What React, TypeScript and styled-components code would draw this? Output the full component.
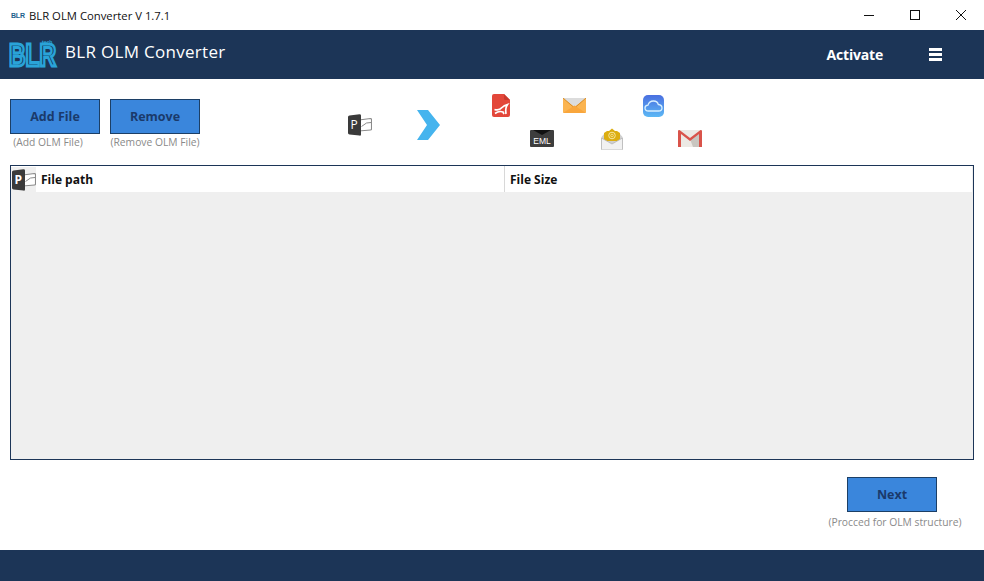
import React from 'react';
import styled, { createGlobalStyle } from 'styled-components';

const GlobalStyle = createGlobalStyle`
  html, body, #root {
    margin: 0;
    height: 100%;
  }
  body {
    background: #ffffff;
    font-family: "Open Sans", "Noto Sans", sans-serif;
    overflow: hidden;
  }
`;

const OutlookIcon = () => (
  <svg width="25" height="22" viewBox="0 0 25 22">
    <path d="M12 6 L23.500 4.500 Q24.500 4.500 24.500 5.500 V15 Q24.500 16 23.500 16 L12 17 Z" fill="#fff" stroke="#8a8a8a" strokeWidth="1.100" />
    <path d="M14.500 12.500 L19.500 9 L24 8.500" fill="none" stroke="#8a8a8a" strokeWidth="1" />
    <path d="M1 3 Q1 1.600 2.500 1.400 L12.500 0.200 Q14 0.200 14 1.600 V20.400 Q14 21.800 12.500 21.600 L2.500 20.600 Q1 20.400 1 19 Z" fill="#3a3a3a" />
    <text x="3.500" y="15" fontFamily="'Open Sans', sans-serif" fontSize="12" fill="#fff">P</text>
  </svg>
);

const ChevronIcon = () => (
  <svg width="23" height="30" viewBox="0 0 23 30">
    <path d="M0 0 H11 L23 15 L11 30 H0 L10 15 Z" fill="#45b4ee" />
  </svg>
);

const PdfIcon = () => (
  <svg width="18" height="23" viewBox="0 0 18 23">
    <path d="M2 0 H12 L18 6 V21 Q18 23 16 23 H2 Q0 23 0 21 V2 Q0 0 2 0 Z" fill="#e3473a" />
    <path d="M12 0 L18 6 H13.500 Q12 6 12 4.500 Z" fill="#c93a2e" />
    <path d="M2.500 15.500 Q7 17 10 13.500 Q12 11.500 15.500 10.500 Q13 14 14 20 M3 19.500 Q7 16.500 11 18 L12 20" fill="none" stroke="#fff" strokeWidth="1.700" />
  </svg>
);

const MailIcon = () => (
  <svg width="23" height="15" viewBox="0 0 23 15">
    <rect width="23" height="15" rx="1" fill="#fbb450" />
    <path d="M0 0 H23 L11.500 9 Z" fill="#dcdcdc" />
    <path d="M0 0 L11.500 10 L23 0" fill="none" stroke="#d98f2b" strokeWidth="1" />
    <path d="M0 15 L11.500 7.500 L23 15 Z" fill="#f9a63c" />
  </svg>
);

const CloudIcon = () => (
  <svg width="21" height="22" viewBox="0 0 21 22">
    <defs>
      <linearGradient id="cloudBg" x1="0" y1="0" x2="0" y2="1">
        <stop offset="0" stopColor="#4a6fe0" />
        <stop offset="1" stopColor="#5cb8f5" />
      </linearGradient>
    </defs>
    <rect width="21" height="22" rx="5" fill="url(#cloudBg)" />
    <path d="M5.500 16 Q2 16 2 13 Q2 10.500 5 10.200 Q6 6 10.500 6 Q14.500 6 15.300 9.500 Q19 10 19 13 Q19 16 15.500 16 Z" fill="none" stroke="#d8f0ff" strokeWidth="1.300" />
  </svg>
);

const EmlIcon = () => (
  <svg width="24" height="17" viewBox="0 0 24 17">
    <rect width="24" height="17" rx="1" fill="#3d3d3d" />
    <path d="M3 0 H21 L12 5 Z" fill="#111" />
    <text x="12" y="14" textAnchor="middle" fontFamily="'Liberation Sans', sans-serif" fontSize="8.500" fill="#fff">EML</text>
  </svg>
);

const OpenMailIcon = () => (
  <svg width="22" height="22" viewBox="0 0 22 22">
    <path d="M0.500 9 L3 6 H19 L21.500 9 V21 Q21.500 22 20.500 22 H1.500 Q0.500 22 0.500 21 Z" fill="#cfcfcf" />
    <path d="M3 5 L6 3 H8 L11 0.500 L14 3 H16 L19 5 V13 H3 Z" fill="#dcae12" />
    <circle cx="11" cy="7.500" r="3.300" fill="none" stroke="#f6e6a0" strokeWidth="1" />
    <circle cx="11" cy="7.500" r="1.300" fill="none" stroke="#f6e6a0" strokeWidth="0.800" />
    <path d="M0.500 10 L11 16 L21.500 10 V21 Q21.500 22 20.500 22 H1.500 Q0.500 22 0.500 21 Z" fill="#f1f1f1" stroke="#b5b5b5" strokeWidth="0.800" />
  </svg>
);

const GmailIcon = () => (
  <svg width="24" height="17" viewBox="0 0 24 17">
    <rect width="24" height="17" fill="#ece9e4" />
    <path d="M12 9 L21 3 V17 H15 Z" fill="#c9c6c0" />
    <path d="M0 1 Q0 0 1.500 0 L12 8 L22.500 0 Q24 0 24 1 V17 H21 V4 L12 11 L3 4 V17 H0 Z" fill="#d9534a" />
  </svg>
);

const Page = styled.div`
  display: flex;
  flex-direction: column;
  height: 100%;
`;

const TitleBar = styled.div`
  display: flex;
  align-items: center;
  height: 30px;
  padding-left: 11px;
  background: #ffffff;
`;

const TinyLogo = styled.span`
  width: 18px;
  font: 800 7px "Liberation Sans", sans-serif;
  letter-spacing: -0.2px;
  color: #1c5f8c;
`;

const WindowTitle = styled.span`
  font-size: 11.3px;
  color: #111111;
`;

const WindowButtons = styled.div`
  display: flex;
  margin-left: auto;
`;

const WindowButton = styled.div`
  display: flex;
  align-items: center;
  justify-content: center;
  width: 46px;
  height: 30px;
`;

const Header = styled.header`
  display: flex;
  align-items: center;
  height: 49px;
  padding-left: 9px;
  background: #1c3557;
`;

const Logo = styled.div`
  position: relative;
  width: 56px;
  height: 30px;
`;

const LogoLetters = styled.span`
  display: block;
  width: 70px;
  margin-top: 5px;
  font: 900 31px/22px "Liberation Sans", sans-serif;
  color: #123a5c;
  -webkit-text-stroke: 3px #2aa3d8;
  transform: scaleX(0.74);
  transform-origin: left center;
`;

const LogoTag = styled.span`
  position: absolute;
  top: -1px;
  left: 33px;
  font: 700 5px "Liberation Sans", sans-serif;
  color: #2aa3d8;
`;

const AppName = styled.h1`
  margin: 0 0 7px;
  font-size: 17px;
  font-weight: 400;
  letter-spacing: 0.3px;
  color: #ffffff;
`;

const Activate = styled.span`
  margin-left: auto;
  font-size: 14px;
  font-weight: 700;
  letter-spacing: -0.2px;
  color: #ffffff;
`;

const Burger = styled.div`
  display: flex;
  flex-direction: column;
  gap: 2px;
  width: 13px;
  margin: 0 42px 0 46px;
`;

const BurgerLine = styled.i`
  height: 3px;
  background: #ffffff;
`;

const Main = styled.main`
  display: flex;
  flex: 1;
  flex-direction: column;
  padding: 15px 10px 0;
`;

const Toolbar = styled.div`
  display: flex;
  height: 71px;
`;

const ActionGroup = styled.div`
  display: flex;
  flex-direction: column;
  align-items: center;
  width: 90px;
  margin-right: 10px;
`;

const ActionButton = styled.button`
  width: 90px;
  height: 35px;
  margin-top: 5px;
  padding: 0;
  border: 1px solid #1c3f66;
  background: #3a86dc;
  font: 700 12.5px "Open Sans", sans-serif;
  color: #1a3a6b;
`;

const Caption = styled.span<{ $left?: number; $right?: number; $drop?: number }>`
  margin: ${(p) => 1 + (p.$drop ?? 0)}px ${(p) => p.$right ?? 0}px 0 ${(p) => p.$left ?? 0}px;
  font-size: 10.3px;
  line-height: 14px;
  white-space: nowrap;
  color: #8a8a8a;
`;

const ConversionFlow = styled.div`
  display: flex;
  align-items: flex-start;
  margin-left: 137px;
`;

const SourceIcon = styled.div`
  margin-top: 20px;
  width: 70px;
`;

const ArrowIcon = styled.div`
  margin-top: 16px;
  width: 75px;
`;

const Targets = styled.div`
  display: flex;
  flex-direction: column;
  gap: 10px;
`;

const TargetRow = styled.div<{ $indent?: number }>`
  display: flex;
  align-items: center;
  height: 23px;
  padding-left: ${(p) => p.$indent ?? 0}px;
`;

const TargetSlot = styled.div<{ $width: number }>`
  display: flex;
  width: ${(p) => p.$width}px;
`;

const FileTable = styled.section`
  display: flex;
  flex-direction: column;
  height: 295px;
  box-sizing: border-box;
  border: 1px solid #1c3557;
  background: #efefef;
`;

const TableHead = styled.div`
  display: grid;
  grid-template-columns: 493px 468px;
  height: 25px;
`;

const HeadCell = styled.div`
  display: flex;
  align-items: center;
  gap: 5px;
  padding: 1px 0 0 5px;
  background: #ffffff;
  font-size: 12px;
  font-weight: 700;
  color: #111111;
  & + & {
    border-left: 1px solid #d8d8d8;
  }
`;

const PathCell = styled(HeadCell)`
  padding-left: 0;
`;

const HeadIcon = styled.div`
  display: flex;
  align-items: center;
  height: 25px;
  background: #efefef;
`;

const Actions = styled.div`
  display: flex;
  flex-direction: column;
  align-items: center;
  align-self: flex-end;
  width: 134px;
  margin-top: 12px;
  padding-right: 15px;
`;

const Footer = styled.footer`
  height: 31px;
  background: #1c3557;
`;

export default function App() {
  return (
    <Page>
      <GlobalStyle />
      <TitleBar>
        <TinyLogo>BLR</TinyLogo>
        <WindowTitle>BLR OLM Converter V 1.7.1</WindowTitle>
        <WindowButtons>
          <WindowButton>
            <svg width="10" height="10" viewBox="0 0 10 10">
              <path d="M0 5.500 H10" stroke="#111" strokeWidth="1" />
            </svg>
          </WindowButton>
          <WindowButton>
            <svg width="10" height="10" viewBox="0 0 10 10">
              <rect x="0.500" y="0.500" width="9" height="9" fill="none" stroke="#111" strokeWidth="1" />
            </svg>
          </WindowButton>
          <WindowButton>
            <svg width="10" height="10" viewBox="0 0 10 10">
              <path d="M0 0 L10 10 M10 0 L0 10" stroke="#111" strokeWidth="1" />
            </svg>
          </WindowButton>
        </WindowButtons>
      </TitleBar>
      <Header>
        <Logo>
          <LogoLetters>BLR</LogoLetters>
          <LogoTag>tech</LogoTag>
        </Logo>
        <AppName>BLR OLM Converter</AppName>
        <Activate>Activate</Activate>
        <Burger>
          <BurgerLine />
          <BurgerLine />
          <BurgerLine />
        </Burger>
      </Header>
      <Main>
        <Toolbar>
          <ActionGroup>
            <ActionButton>Add File</ActionButton>
            <Caption $right={14}>(Add OLM File)</Caption>
          </ActionGroup>
          <ActionGroup>
            <ActionButton>Remove</ActionButton>
            <Caption>(Remove OLM File)</Caption>
          </ActionGroup>
          <ConversionFlow>
            <SourceIcon>
              <OutlookIcon />
            </SourceIcon>
            <ArrowIcon>
              <ChevronIcon />
            </ArrowIcon>
            <Targets>
              <TargetRow>
                <TargetSlot $width={71}>
                  <PdfIcon />
                </TargetSlot>
                <TargetSlot $width={80}>
                  <MailIcon />
                </TargetSlot>
                <TargetSlot $width={22}>
                  <CloudIcon />
                </TargetSlot>
              </TargetRow>
              <TargetRow $indent={38}>
                <TargetSlot $width={71}>
                  <EmlIcon />
                </TargetSlot>
                <TargetSlot $width={77}>
                  <OpenMailIcon />
                </TargetSlot>
                <TargetSlot $width={24}>
                  <GmailIcon />
                </TargetSlot>
              </TargetRow>
            </Targets>
          </ConversionFlow>
        </Toolbar>
        <FileTable>
          <TableHead>
            <PathCell>
              <HeadIcon>
                <OutlookIcon />
              </HeadIcon>
              File path
            </PathCell>
            <HeadCell>File Size</HeadCell>
          </TableHead>
        </FileTable>
        <Actions>
          <ActionButton>Next</ActionButton>
          <Caption $drop={2} $left={6}>(Procced for OLM structure)</Caption>
        </Actions>
      </Main>
      <Footer />
    </Page>
  );
}
